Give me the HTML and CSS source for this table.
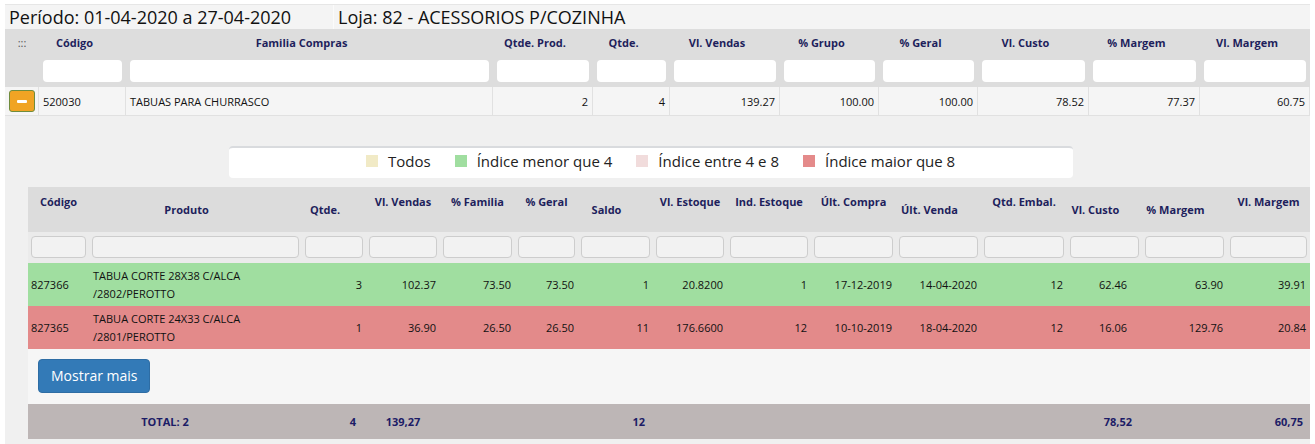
FILE: index.html
```html
<!DOCTYPE html>
<html lang="pt">
<head>
<meta charset="utf-8">
<title>Relatório</title>
<link rel="stylesheet" href="styles.css">
</head>
<body>
<div class="page">
  <div class="title-bar">
    <div class="title-cell period">Período: 01-04-2020 a 27-04-2020</div>
    <div class="title-cell loja">Loja: 82 - ACESSORIOS P/COZINHA</div>
  </div>

  <div class="outer">
    <div class="oh dots">:::</div>
    <div class="oh">Código</div>
    <div class="oh">Familia Compras</div>
    <div class="oh">Qtde. Prod.</div>
    <div class="oh">Qtde.</div>
    <div class="oh">Vl. Vendas</div>
    <div class="oh">% Grupo</div>
    <div class="oh">% Geral</div>
    <div class="oh">Vl. Custo</div>
    <div class="oh">% Margem</div>
    <div class="oh">Vl. Margem</div>

    <div class="of"></div>
    <div class="of"><input type="text"></div>
    <div class="of"><input type="text"></div>
    <div class="of"><input type="text"></div>
    <div class="of"><input type="text"></div>
    <div class="of"><input type="text"></div>
    <div class="of"><input type="text"></div>
    <div class="of"><input type="text"></div>
    <div class="of"><input type="text"></div>
    <div class="of"><input type="text"></div>
    <div class="of"><input type="text"></div>

    <div class="od first"><span class="minus"><span class="bar"></span></span></div>
    <div class="od">520030</div>
    <div class="od">TABUAS PARA CHURRASCO</div>
    <div class="od num">2</div>
    <div class="od num">4</div>
    <div class="od num">139.27</div>
    <div class="od num">100.00</div>
    <div class="od num">100.00</div>
    <div class="od num">78.52</div>
    <div class="od num">77.37</div>
    <div class="od num">60.75</div>
  </div>

  <div class="detail">
    <div class="legend">
      <span class="leg"><span class="sq sq-all"></span>Todos</span>
      <span class="leg"><span class="sq sq-green"></span>Índice menor que 4</span>
      <span class="leg"><span class="sq sq-pink"></span>Índice entre 4 e 8</span>
      <span class="leg"><span class="sq sq-red"></span>Índice maior que 8</span>
    </div>

    <div class="inner">
      <div class="ig">
        <div class="ih w">Código</div>
        <div class="ih i">Produto</div>
        <div class="ih i">Qtde.</div>
        <div class="ih w">Vl. Vendas</div>
        <div class="ih w">% Familia</div>
        <div class="ih w">% Geral</div>
        <div class="ih i">Saldo</div>
        <div class="ih w">Vl. Estoque</div>
        <div class="ih w">Ind. Estoque</div>
        <div class="ih w">Últ. Compra</div>
        <div class="ih i">Últ. Venda</div>
        <div class="ih w">Qtd. Embal.</div>
        <div class="ih i">Vl. Custo</div>
        <div class="ih i">% Margem</div>
        <div class="ih w">Vl. Margem</div>

        <div class="if"><input type="text"></div>
        <div class="if"><input type="text"></div>
        <div class="if"><input type="text"></div>
        <div class="if"><input type="text"></div>
        <div class="if"><input type="text"></div>
        <div class="if"><input type="text"></div>
        <div class="if"><input type="text"></div>
        <div class="if"><input type="text"></div>
        <div class="if"><input type="text"></div>
        <div class="if"><input type="text"></div>
        <div class="if"><input type="text"></div>
        <div class="if"><input type="text"></div>
        <div class="if"><input type="text"></div>
        <div class="if"><input type="text"></div>
        <div class="if"><input type="text"></div>

        <div class="id green code">827366</div>
        <div class="id green">TABUA CORTE 28X38 C/ALCA<br>/2802/PEROTTO</div>
        <div class="id green num">3</div>
        <div class="id green num">102.37</div>
        <div class="id green num">73.50</div>
        <div class="id green num">73.50</div>
        <div class="id green num">1</div>
        <div class="id green num">20.8200</div>
        <div class="id green num">1</div>
        <div class="id green num">17-12-2019</div>
        <div class="id green num">14-04-2020</div>
        <div class="id green num">12</div>
        <div class="id green num custo">62.46</div>
        <div class="id green num">63.90</div>
        <div class="id green num">39.91</div>

        <div class="id red code">827365</div>
        <div class="id red">TABUA CORTE 24X33 C/ALCA<br>/2801/PEROTTO</div>
        <div class="id red num">1</div>
        <div class="id red num">36.90</div>
        <div class="id red num">26.50</div>
        <div class="id red num">26.50</div>
        <div class="id red num">11</div>
        <div class="id red num">176.6600</div>
        <div class="id red num">12</div>
        <div class="id red num">10-10-2019</div>
        <div class="id red num">18-04-2020</div>
        <div class="id red num">12</div>
        <div class="id red num custo">16.06</div>
        <div class="id red num">129.76</div>
        <div class="id red num">20.84</div>
      </div>

      <div class="more"><button class="btn-more" type="button">Mostrar mais</button></div>

      <div class="ig total">
        <div class="tc span2 center">TOTAL: 2</div>
        <div class="tc right pr10">4</div>
        <div class="tc center">139,27</div>
        <div class="tc"></div>
        <div class="tc"></div>
        <div class="tc right pr8">12</div>
        <div class="tc"></div>
        <div class="tc"></div>
        <div class="tc"></div>
        <div class="tc"></div>
        <div class="tc"></div>
        <div class="tc right pr10">78,52</div>
        <div class="tc"></div>
        <div class="tc right pr7">60,75</div>
      </div>
    </div>
  </div>
</div>
</body>
</html>
```

FILE: styles.css
```css
* { box-sizing: border-box; }

body {
  margin: 0;
  background: #ffffff;
  font-family: "Open Sans", "Noto Sans", sans-serif;
  color: #111;
}

.page {
  padding: 4px 5px 0 5px;
}

/* title bar */
.title-bar {
  display: flex;
  height: 25px;
  background: #f4f4f4;
  border-top: 1px solid #e6e6e6;
}
.title-cell {
  font-size: 18px;
  line-height: 24px;
  color: #111;
  white-space: nowrap;
}
.period {
  width: 328px;
  padding-left: 4px;
}
.loja {
  flex: 1;
  padding-left: 4px;
  border-left: 1px solid #fbfbfb;
}

/* outer table */
.outer {
  display: grid;
  grid-template-columns: 34px 87px 367px 100px 77px 110px 99px 99px 111px 111px 110px;
}
.oh {
  height: 27px;
  background: #dddddd;
  display: flex;
  align-items: center;
  justify-content: center;
  padding-right: 16px;
  font-size: 11px;
  font-weight: 700;
  color: #1e1f5c;
  white-space: nowrap;
}
.oh.dots {
  padding-right: 0;
  font-weight: 400;
  color: #555;
}
.of {
  height: 31px;
  background: #dddddd;
  padding: 4px 4px 5px 4px;
}
.of input {
  display: block;
  width: 100%;
  height: 22px;
  border: none;
  border-radius: 4px;
  background: #ffffff;
}
.od {
  height: 29px;
  background: #f5f5f5;
  border-right: 1px solid #e1e1e1;
  border-bottom: 1px solid #e1e1e1;
  display: flex;
  align-items: center;
  padding: 0 4px;
  font-size: 11px;
  color: #111;
  white-space: nowrap;
}
.od.num { justify-content: flex-end; }
.od.first { padding: 0 3px 0 4px; }
.minus {
  display: flex;
  align-items: center;
  justify-content: center;
  width: 26px;
  height: 22px;
  background: #f0a424;
  border: 1px solid #6f8c3c;
  border-radius: 3px;
}
.minus .bar {
  width: 10px;
  height: 3px;
  background: #ffffff;
  border-radius: 1px;
}

/* detail */
.detail {
  background: #f0f0f0;
  padding: 30px 0 5px 23px;
}
.legend {
  width: 844px;
  height: 32px;
  margin-left: 201px;
  margin-bottom: 9px;
  background: #ffffff;
  border-top: 2px solid #d9dbde;
  border-radius: 4px;
  display: flex;
  align-items: center;
  padding-left: 137px;
  padding-bottom: 4px;
  gap: 24px;
  font-size: 15px;
  color: #222;
}
.leg {
  display: flex;
  align-items: center;
  gap: 10px;
  white-space: nowrap;
}
.sq {
  display: inline-block;
  width: 12px;
  height: 12px;
}
.sq-all { background: #f1eac6; }
.sq-green { background: #a0dea0; }
.sq-pink { background: #f1dcdc; }
.sq-red { background: #e48a8a; }

/* inner table */
.ig {
  display: grid;
  grid-template-columns: 61px 213px 64px 74px 75px 63px 75px 74px 84px 85px 85px 86px 75px 85px 83px;
}
.ih {
  height: 45px;
  background: #dcdcdc;
  display: flex;
  align-items: center;
  justify-content: center;
  text-align: center;
  font-size: 11px;
  line-height: 16px;
  font-weight: 700;
  color: #1e1f5c;
  white-space: nowrap;
}
.ih.i { padding-right: 18px; }
.ih.w { padding-bottom: 16px; }
.if {
  height: 31px;
  background: #ebebeb;
  padding: 4px 3px 5px 3px;
}
.if input {
  display: block;
  width: 100%;
  height: 22px;
  border: 1px solid #cdcdcd;
  border-radius: 4px;
  background: #f2f2f2;
}
.id {
  height: 43px;
  display: flex;
  align-items: center;
  padding: 0 4px;
  font-size: 11px;
  line-height: 18px;
  color: #111;
  white-space: nowrap;
}
.id.code { padding-left: 3px; }
.id.num { justify-content: flex-end; }
.id.custo { padding-right: 15px; }
.green { background: #a0dea0; }
.red { background: #e38a8a; }

.more {
  height: 55px;
  background: #f6f6f6;
  padding: 10px;
}
.btn-more {
  display: block;
  font-family: "Open Sans", "Noto Sans", sans-serif;
  font-size: 14px;
  line-height: 20px;
  padding: 6px 12px;
  color: #ffffff;
  background: #337ab7;
  border: 1px solid #2e6da4;
  border-radius: 4px;
}

.total .tc {
  height: 35px;
  background: #bdb6b6;
  display: flex;
  align-items: center;
  font-size: 11px;
  font-weight: 700;
  color: #1c1c66;
  white-space: nowrap;
}
.tc.span2 { grid-column: span 2; }
.tc.center { justify-content: center; }
.tc.right { justify-content: flex-end; }
.tc.pr10 { padding-right: 10px; }
.tc.pr8 { padding-right: 8px; }
.tc.pr7 { padding-right: 7px; }
```
